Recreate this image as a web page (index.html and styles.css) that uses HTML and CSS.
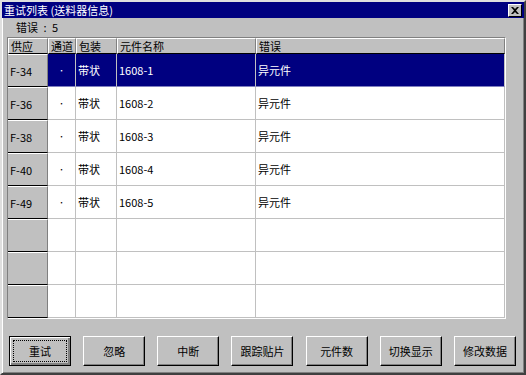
FILE: index.html
```html
<!DOCTYPE html>
<html lang="zh">
<head>
  <meta charset="UTF-8">
  <title>重试列表</title>
  <link rel="stylesheet" href="styles.css">
</head>
<body>
  <div class="ventana">
    <div class="titulo">
      <span>重试列表 (送料器信息)</span>
      <span class="cerrar">
        <svg width="8" height="7" viewBox="0 0 8 7"><path d="M0 0h2l2 2 2-2h2L5 3.5 8 7H6L4 5 2 7H0l3-3.5z" fill="#000"/></svg>
      </span>
    </div>
    <div class="info">错误 : 5</div>

    <div class="rejilla">
      <table>
        <colgroup>
          <col class="c1"><col class="c2"><col class="c3"><col class="c4"><col>
        </colgroup>
        <thead>
          <tr><th>供应</th><th>通道</th><th>包装</th><th>元件名称</th><th>错误</th></tr>
        </thead>
        <tbody id="filas"></tbody>
      </table>
    </div>

    <div class="botones">
      <button class="defecto"><span>重试</span></button>
      <button><span>忽略</span></button>
      <button><span>中断</span></button>
      <button><span>跟踪贴片</span></button>
      <button><span>元件数</span></button>
      <button><span>切换显示</span></button>
      <button><span>修改数据</span></button>
    </div>
  </div>

  <script>
    const datos = [
      { sup: 'F-34', nombre: '1608-1' },
      { sup: 'F-36', nombre: '1608-2' },
      { sup: 'F-38', nombre: '1608-3' },
      { sup: 'F-40', nombre: '1608-4' },
      { sup: 'F-49', nombre: '1608-5' }
    ];

    const tbody = document.getElementById('filas');
    for (let i = 0; i < 8; i++) {
      const d = datos[i];
      const tr = document.createElement('tr');
      if (i === 0) tr.className = 'sel';
      if (d) {
        tr.innerHTML = `
          <td class="cab">${d.sup}</td>
          <td class="punto">·</td>
          <td>带状</td>
          <td>${d.nombre}</td>
          <td>异元件</td>
        `;
      } else {
        tr.innerHTML = '<td class="cab"></td><td></td><td></td><td></td><td></td>';
      }
      tbody.appendChild(tr);
    }
  </script>
</body>
</html>
```

FILE: styles.css
```css
body {
  margin: 0;
  background: #c0c0c0;
  font-family: "Noto Sans CJK SC", "DejaVu Sans", sans-serif;
  font-size: 11px;
}
.ventana {
  width: 526px;
  height: 375px;
  box-sizing: border-box;
  background: #c0c0c0;
  border: 2px solid;
  border-color: #dfdfdf #404040 #404040 #dfdfdf;
  box-shadow: inset 1px 1px 0 #fff, inset -1px -1px 0 #808080;
}
.titulo {
  height: 16px;
  background: #000080;
  color: #fff;
  font-size: 11px;
  line-height: 16px;
  padding-left: 2px;
  display: flex;
  justify-content: space-between;
  align-items: center;
}
.cerrar {
  width: 12px;
  height: 11px;
  margin-right: 2px;
  background: #c0c0c0;
  border: 1px solid;
  border-color: #fff #000 #000 #fff;
  display: flex;
  align-items: center;
  justify-content: center;
}
.info {
  height: 19px;
  line-height: 19px;
  padding-left: 14px;
  font-size: 11px;
  word-spacing: 3px;
}
.rejilla {
  margin-left: 5px;
  width: 497px;
  border: 1px solid;
  border-color: #808080 #fff #fff #808080;
  background: #fff;
}
table {
  width: 497px;
  table-layout: fixed;
  border-collapse: separate;
  border-spacing: 0;
}
col.c1 { width: 40px; }
col.c2 { width: 28px; }
col.c3 { width: 41px; }
col.c4 { width: 139px; }
th {
  height: 14px;
  padding: 0 0 0 2px;
  background: #c0c0c0;
  font-weight: normal;
  text-align: left;
  line-height: 14px;
  border-top: 1px solid #fff;
  border-left: 1px solid #fff;
  border-right: 1px solid #808080;
  border-bottom: 1px solid #000;
  white-space: nowrap;
  overflow: hidden;
}
td {
  height: 32px;
  padding: 0 0 0 2px;
  border-right: 1px solid #c0c0c0;
  border-bottom: 1px solid #c0c0c0;
  white-space: nowrap;
  overflow: hidden;
}
td.cab {
  background: #c0c0c0;
  height: 31px;
  border-top: 1px solid #fff;
  border-bottom: 1px solid #000;
  border-right: 1px solid #808080;
}
td.punto {
  text-align: center;
  padding: 0;
  font-size: 7px;
  vertical-align: middle;
}
tr.sel td {
  background: #000080;
  color: #fff;
  border-bottom-color: #8080c0;
}
tr.sel td.cab {
  background: #c0c0c0;
  color: #000;
  border-bottom-color: #000;
}
.botones {
  margin: 17px 8px 0 7px;
  display: flex;
  justify-content: space-between;
}
button {
  width: 62px;
  height: 30px;
  padding: 0;
  background: #c0c0c0;
  font-family: inherit;
  font-size: 11px;
  color: #000;
  border: 1px solid;
  border-color: #fff #000 #000 #fff;
  box-shadow: inset -1px -1px 0 #808080;
}
button.defecto {
  border: 1px solid #000;
  box-shadow: inset 1px 1px 0 #fff, inset -2px -2px 0 #808080;
  padding: 3px;
}
button.defecto span {
  display: flex;
  height: 100%;
  align-items: center;
  justify-content: center;
  border: 1px dotted #000;
  box-sizing: border-box;
}
```
